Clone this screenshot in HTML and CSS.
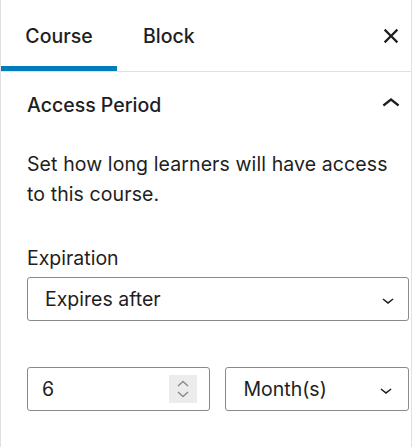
FILE: index.html
```html
<!DOCTYPE html>
<html>
<head>
<meta charset="utf-8">
<link rel="stylesheet" href="styles.css">
</head>
<body>
<div class="sidebar">
  <div class="tabs">
    <div class="tab tab-active">Course</div>
    <div class="tab tab-block">Block</div>
    <div class="close">
      <svg viewBox="0 0 24 24" width="36" height="36"><path d="M12 13.06l3.712 3.713 1.061-1.06L13.061 12l3.712-3.712-1.06-1.06L12 10.938 8.288 7.227l-1.061 1.06L10.939 12l-3.712 3.712 1.06 1.061L12 13.061z" fill="#1e1e1e"/></svg>
    </div>
  </div>
  <div class="panel">
    <div class="panel-header">
      <span class="panel-title">Access Period</span>
      <svg class="panel-toggle" viewBox="0 0 24 24" width="36" height="36"><path d="M6.5 12.4L12 8l5.5 4.4-.9 1.2L12 10l-4.6 3.6-1-1.2z" fill="#1e1e1e"/></svg>
    </div>
    <div class="panel-body">
      <p class="desc">Set how long learners will have access to this course.</p>
      <div class="label">Expiration</div>
      <div class="select">
        <span>Expires after</span>
        <svg class="arrow" viewBox="0 0 24 24" width="24" height="24"><path d="M17.5 11.6L12 16l-5.5-4.4.9-1.2L12 14l4.6-3.6 1 1.2z" fill="#1e1e1e"/></svg>
      </div>
      <div class="row">
        <div class="number">
          <span>6</span>
          <span class="spinner">
            <svg viewBox="0 0 28 28" width="28" height="28"><path d="M9 11l5-4.5 5 4.5M9 17l5 4.5 5-4.5" fill="none" stroke="#8a8a8a" stroke-width="1.4"/></svg>
          </span>
        </div>
        <div class="select select-small">
          <span>Month(s)</span>
          <svg class="arrow" viewBox="0 0 24 24" width="24" height="24"><path d="M17.5 11.6L12 16l-5.5-4.4.9-1.2L12 14l4.6-3.6 1 1.2z" fill="#1e1e1e"/></svg>
        </div>
      </div>
    </div>
  </div>
</div>
</body>
</html>
```

FILE: styles.css
```css
* { box-sizing: border-box; }
html, body { margin: 0; padding: 0; background: #fff; }
body {
  font-family: Inter, "Liberation Sans", Arial, sans-serif;
  color: #1e1e1e;
  font-size: 19.5px;
}
.sidebar {
  width: 412px;
  height: 447px;
  border-left: 1px solid #e0e0e0;
  border-right: 1px solid #e0e0e0;
}
.tabs {
  display: flex;
  align-items: center;
  height: 72px;
  border-bottom: 1px solid #e0e0e0;
  padding-right: 2px;
}
.tab {
  height: 71px;
  display: flex;
  align-items: center;
  font-weight: 500;
}
.tab-active {
  width: 116px;
  justify-content: center;
  box-shadow: inset 0 -5px 0 #007cba;
}
.tab-block {
  padding-left: 26px;
}
.close {
  margin-left: auto;
  width: 36px;
  height: 36px;
}
.close svg { display: block; }
.panel-header {
  display: flex;
  align-items: center;
  justify-content: space-between;
  height: 66px;
  padding: 0 2px 0 26px;
}
.panel-title { font-weight: 500; }
.panel-toggle { display: block; margin-top: -3px; }
.panel-body {
  padding: 12px 2px 24px 26px;
}
.desc {
  margin: 0;
  line-height: 29.5px;
  padding-right: 8px;
  letter-spacing: 0.1px;
}
.label {
  margin-top: 35px;
  line-height: 29px;
  margin-bottom: 4px;
}
.select {
  height: 44px;
  border: 1.5px solid #8a8a8a;
  border-radius: 3px;
  display: flex;
  align-items: center;
  justify-content: space-between;
  padding: 0 8px 0 17px;
}
.select .arrow { display: block; margin-top: 1px; }
.row {
  display: flex;
  gap: 15px;
  margin-top: 46px;
}
.row > * { flex: 1 1 0; }
.number {
  height: 44px;
  border: 1.5px solid #8a8a8a;
  border-radius: 3px;
  display: flex;
  align-items: center;
  justify-content: space-between;
  padding: 0 12px 0 14px;
}
.spinner {
  width: 28px;
  height: 28px;
  background: #ececec;
}
.spinner svg { display: block; }
.select-small { padding-left: 18px; padding-right: 10px; }
```
